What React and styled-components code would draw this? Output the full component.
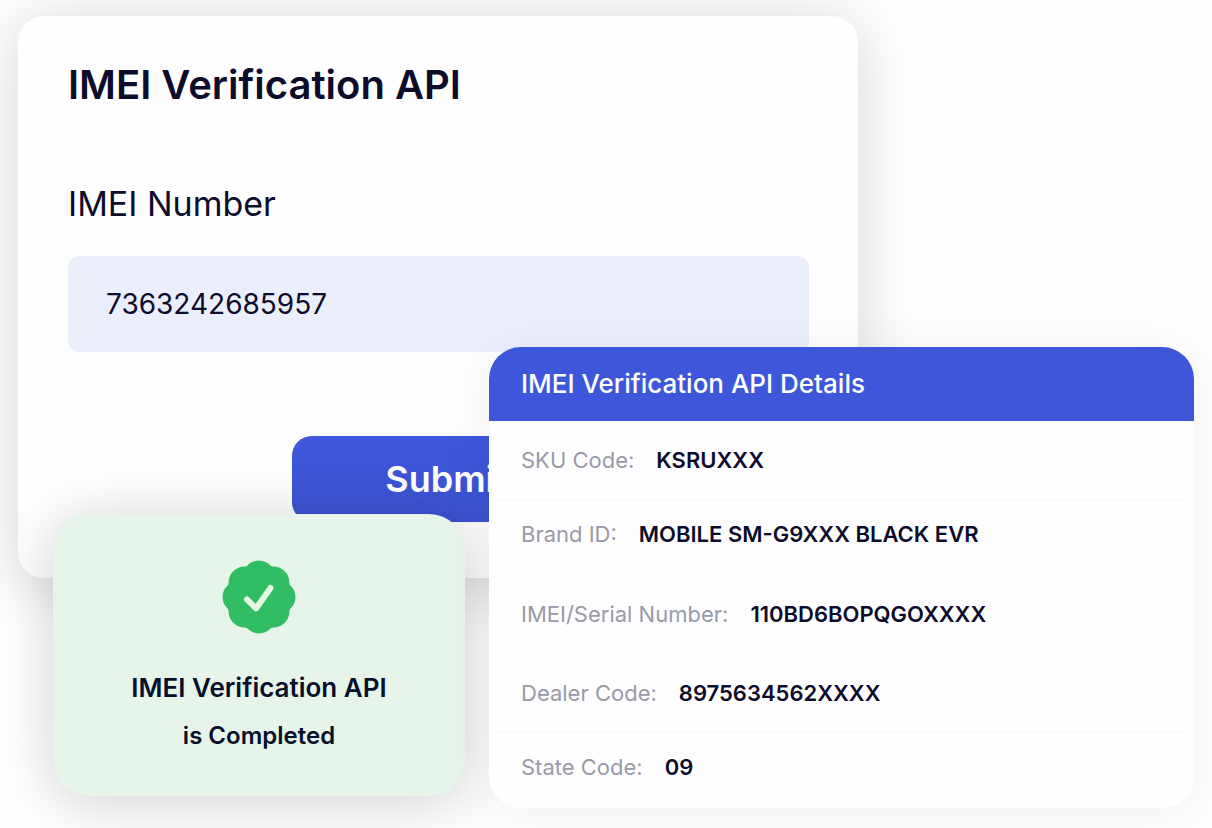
import React from "react";
import styled, { createGlobalStyle } from "styled-components";

const GlobalStyle = createGlobalStyle`
  *, *::before, *::after { box-sizing: border-box; }
  body {
    margin: 0;
    background: #fefefe;
    color: #0d0c2b;
    font-family: Inter, "Liberation Sans", sans-serif;
  }
  h1, h2, p, dl, dd { margin: 0; }
`;

const Stage = styled.main`
  display: grid;
  grid-template-columns: 35fr 412fr 24fr 369fr 336fr;
  align-items: start;
  padding: 16px 18px 20px;
  overflow: hidden;
`;

const FormCard = styled.form`
  grid-area: 1 / 1 / 2 / 5;
  display: flex;
  flex-direction: column;
  min-width: 0;
  padding: 44px 49px 56px 50px;
  border-radius: 26px;
  background: #fefefe;
  box-shadow: 0 6px 60px rgba(0, 0, 0, 0.16);
`;

const Title = styled.h1`
  font-size: 40px;
  font-weight: 600;
  line-height: 50px;
`;

const Label = styled.label`
  margin-top: 72px;
  font-size: 34px;
  line-height: 44px;
`;

const Field = styled.input`
  width: 100%;
  height: 96px;
  margin-top: 30px;
  padding: 0 38px;
  border: 0;
  border-radius: 12px;
  background: #ebeefb;
  color: inherit;
  font: 400 28px Inter, "Liberation Sans", sans-serif;
`;

const SubmitButton = styled.button`
  align-self: center;
  width: 310px;
  height: 86px;
  margin-top: 84px;
  margin-left: 16px;
  border: 0;
  border-radius: 20px;
  background: linear-gradient(#3e57dc, #3c52d0);
  color: #ffffff;
  font: 600 36px Inter, "Liberation Sans", sans-serif;
`;

const StatusCard = styled.section`
  grid-area: 1 / 2 / 2 / 3;
  display: flex;
  flex-direction: column;
  align-items: center;
  margin-top: 498px;
  padding: 46px 0 36px;
  border-radius: 36px;
  background: #e6f4e9;
  box-shadow: 0 6px 56px rgba(0, 0, 0, 0.18);
  text-align: center;
`;

const Badge = styled.svg`
  width: 74px;
  height: 74px;
`;

const StatusText = styled.p`
  margin-top: ${({ $first }) => ($first ? "30px" : "0")};
  color: #06102a;
  font-size: ${({ $first }) => ($first ? "26px" : "24px")};
  font-weight: 600;
  line-height: 48px;
`;

const DetailsCard = styled.section`
  grid-area: 1 / 3 / 2 / 6;
  min-width: 0;
  margin-top: 331px;
  margin-left: 24px;
  border-radius: 32px;
  background: #fefefe;
  box-shadow: 0 4px 56px rgba(0, 0, 0, 0.06);
  overflow: hidden;
`;

const DetailsTitle = styled.h2`
  padding: 0 32px;
  background: #3e57da;
  color: #ffffff;
  font-size: 26px;
  font-weight: 500;
  line-height: 74px;
`;

const DetailsList = styled.dl`
  padding: 0 8px;
`;

const Row = styled.div`
  display: flex;
  gap: 22px;
  padding: ${({ $compact }) => ($compact ? "20px 24px 26px" : "25px 24px")};
  border-bottom: 1px solid ${({ $line }) => $line || "transparent"};
  font-size: 22px;
  line-height: 28px;
  white-space: nowrap;
`;

const Term = styled.dt`
  color: #999aa7;
`;

const Value = styled.dd`
  font-weight: 600;
`;

const details = [
  { term: "SKU Code:", value: "KSRUXXX", line: "#f5f6fb" },
  { term: "Brand ID:", value: "MOBILE SM-G9XXX BLACK EVR", compact: true, line: "#fafafb" },
  { term: "IMEI/Serial Number:", value: "110BD6BOPQGOXXXX" },
  { term: "Dealer Code:", value: "8975634562XXXX", line: "#f3f6fb" },
  { term: "State Code:", value: "09", compact: true },
];

function VerifiedBadge() {
  return (
    <Badge viewBox="0 0 74 74" aria-hidden="true">
      <path
        fill="#31bd64"
        d="M37 .5
          C32 .5 28 2.6 25 6 Q24 6.5 22.5 6.6 A16 16 0 0 0 6.6 22.5 Q6.5 24 6 25 C2.6 28 .5 32 .5 37
          C.5 42 2.6 46 6 49 Q6.5 50 6.6 51.5 A16 16 0 0 0 22.5 67.4 Q24 67.5 25 68 C28 71.4 32 73.5 37 73.5
          C42 73.5 46 71.4 49 68 Q50 67.5 51.5 67.4 A16 16 0 0 0 67.4 51.5 Q67.5 50 68 49 C71.4 46 73.5 42 73.5 37
          C73.5 32 71.4 28 68 25 Q67.5 24 67.4 22.5 A16 16 0 0 0 51.5 6.6 Q50 6.5 49 6 C46 2.6 42 .5 37 .5 Z"
      />
      <path
        d="M25 39.5 L34 48.5 L48.5 28"
        fill="none"
        stroke="#e6f7e5"
        strokeWidth="6"
        strokeLinecap="round"
        strokeLinejoin="round"
      />
    </Badge>
  );
}

export default function App() {
  return (
    <>
      <GlobalStyle />
      <Stage>
        <FormCard onSubmit={(event) => event.preventDefault()}>
          <Title>IMEI Verification API</Title>
          <Label htmlFor="imei">IMEI Number</Label>
          <Field id="imei" type="text" inputMode="numeric" defaultValue="7363242685957" />
          <SubmitButton type="submit">Submit</SubmitButton>
        </FormCard>

        <StatusCard role="status">
          <VerifiedBadge />
          <StatusText $first>IMEI Verification API</StatusText>
          <StatusText>is Completed</StatusText>
        </StatusCard>

        <DetailsCard>
          <DetailsTitle>IMEI Verification API Details</DetailsTitle>
          <DetailsList>
            {details.map(({ term, value, compact, line }) => (
              <Row key={term} $compact={compact} $line={line}>
                <Term>{term}</Term>
                <Value>{value}</Value>
              </Row>
            ))}
          </DetailsList>
        </DetailsCard>
      </Stage>
    </>
  );
}
